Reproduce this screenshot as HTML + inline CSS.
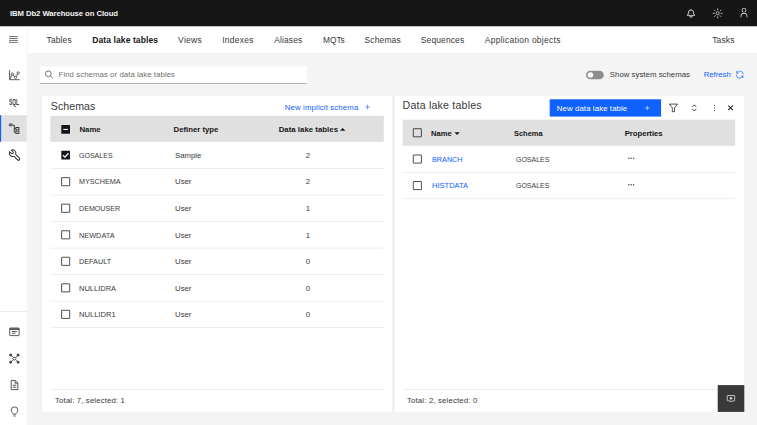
<!DOCTYPE html>
<html lang="en"><head><meta charset="utf-8"><title>IBM Db2 Warehouse on Cloud</title>
<style>
*{box-sizing:border-box;margin:0;padding:0}
html,body{width:757px;height:425px;overflow:hidden}
body{position:relative;background:#f4f4f4;font-family:"Liberation Sans",sans-serif;color:#161616}
.bg{position:absolute;left:0;top:0;display:block}
.t{position:absolute;white-space:nowrap;line-height:1;transform-origin:0 0}

</style></head>
<body>
<svg class="bg" width="757" height="425" viewBox="0 0 757 425">
<!-- chrome -->
<rect x="0" y="0" width="757" height="26.5" fill="#161616"/>
<rect x="0" y="26.5" width="26.8" height="398.5" fill="#fff"/>
<rect x="26.8" y="26.5" width="730.2" height="26.3" fill="#fff"/>
<rect x="26.6" y="26.5" width="1.2" height="26.3" fill="#f6f6f6"/>
<rect x="0" y="115.2" width="26.8" height="26.5" fill="#e0e0e0"/>
<rect x="0" y="115.2" width="1.15" height="26.5" fill="#0f62fe"/>
<rect x="0" y="311" width="26.8" height=".55" fill="#e0e0e0"/>
<!-- search -->
<rect x="40.3" y="66.5" width="266.4" height="16.6" fill="#fff"/>
<rect x="40.3" y="83.05" width="266.4" height=".65" fill="#8d8d8d"/>
<!-- toggle -->
<rect x="586" y="70.7" width="17.8" height="8.6" rx="4.3" fill="#8d8d8d"/>
<circle cx="590.4" cy="75" r="2.8" fill="#fff"/>
<!-- panels -->
<rect x="40.7" y="95.8" width="703.7" height="316.1" fill="#e8e8e8"/>
<rect x="41.5" y="95.8" width="351" height="316.1" fill="#fff"/>
<rect x="394.1" y="95.8" width="350.3" height="316.1" fill="#fff"/>
<!-- left table -->
<rect x="402.6" y="119.7" width="332.6" height="26.1" fill="#e0e0e0"/>
<rect x="50.4" y="115.8" width="333.4" height="26.1" fill="#e0e0e0"/>
<g fill="#e0e0e0">
<rect x="50.4" y="168.2" width="333.4" height=".55"/>
<rect x="50.4" y="194.7" width="333.4" height=".55"/>
<rect x="50.4" y="221.25" width="333.4" height=".55"/>
<rect x="50.4" y="247.8" width="333.4" height=".55"/>
<rect x="50.4" y="274.3" width="333.4" height=".55"/>
<rect x="50.4" y="300.85" width="333.4" height=".55"/>
<rect x="50.4" y="327.4" width="333.4" height=".55"/>
<rect x="50.4" y="389" width="333.4" height=".55"/>
<rect x="402.6" y="172" width="332.6" height=".55"/>
<rect x="402.6" y="198.5" width="332.6" height=".55"/>
<rect x="402.6" y="389" width="315" height=".55"/>
</g>
<!-- checkboxes left -->
<rect x="61.3" y="125.1" width="8.7" height="8.7" rx=".5" fill="#161616"/>
<rect x="63.3" y="128.9" width="4.7" height="1.1" fill="#fff"/>
<rect x="61.3" y="150.85" width="8.7" height="8.7" rx=".5" fill="#161616"/>
<path d="M63 155.25l1.9 1.9 3.6-3.9" fill="none" stroke="#fff" stroke-width="1.15"/>
<g fill="#fff" stroke="#161616" stroke-width=".75">
<rect x="61.6" y="177.65" width="8.1" height="8.1" rx=".2"/>
<rect x="61.6" y="204.2" width="8.1" height="8.1" rx=".2"/>
<rect x="61.6" y="230.75" width="8.1" height="8.1" rx=".2"/>
<rect x="61.6" y="257.25" width="8.1" height="8.1" rx=".2"/>
<rect x="61.6" y="283.8" width="8.1" height="8.1" rx=".2"/>
<rect x="61.6" y="310.3" width="8.1" height="8.1" rx=".2"/>
<rect x="413.3" y="128.7" width="8.1" height="8.1" rx=".2" fill="none"/>
<rect x="413.3" y="155" width="8.1" height="8.1" rx=".2"/>
<rect x="413.3" y="181.5" width="8.1" height="8.1" rx=".2"/>
</g>
<!-- sort arrows -->
<path d="M340 130.7l2.7-2.6 2.7 2.6z" fill="#161616"/>
<path d="M454.4 132.2h5.4l-2.7 2.7z" fill="#161616"/>
<!-- plus (implicit schema) -->
<path d="M367.6 104.8v4.4M365.4 107h4.4" stroke="#0f62fe" stroke-width=".6" fill="none"/>
<!-- button -->
<rect x="549.7" y="99.3" width="111.4" height="17.3" fill="#0f62fe"/>
<path d="M647.3 105.9v4.2M645.2 108h4.2" stroke="#fff" stroke-width=".6" fill="none"/>
<!-- ellipsis -->
<g fill="#393939"><circle cx="628.8" cy="158.3" r=".7"/><circle cx="631.2" cy="158.3" r=".7"/><circle cx="633.6" cy="158.3" r=".7"/>
<circle cx="628.8" cy="184.8" r=".7"/><circle cx="631.2" cy="184.8" r=".7"/><circle cx="633.6" cy="184.8" r=".7"/></g>
<!-- fab -->
<rect x="717.7" y="385.1" width="26.6" height="26.8" fill="#393939"/>
<g transform="translate(726.9 395.1)" fill="none" stroke="#f4f4f4" stroke-width=".7" stroke-linejoin="round"><path d="M.9.4h6.4a.5.5 0 0 1 .5.5v4.4a.5.5 0 0 1-.5.5H5.1L4.3 7 3.5 5.800H.9a.5.5 0 0 1-.5-.5V.9A.5.5 0 0 1 .9.400z"/><path d="M4.1 1.500l.6 1.100 1.200.100-.900.800.300 1.200-1.200-.700-1.200.700.300-1.200-.900-.800 1.200-.100z" fill="#f4f4f4" stroke="none"/></g>
<!-- header icons -->
<g transform="translate(686.44 8.6) scale(.285)" fill="#f4f4f4" stroke="#f4f4f4" stroke-width=".8"><path d="M28.7,20.3L26,17.6V14a10,10,0,0,0-9-9.9V2H15V4.1A10,10,0,0,0,6,14v3.6L3.3,20.3A1,1,0,0,0,3,21v3a1,1,0,0,0,1,1h7v.8a5.2,5.2,0,0,0,4.5,5.2A5,5,0,0,0,21,26V25h7a1,1,0,0,0,1-1V21A1,1,0,0,0,28.7,20.3ZM19,26a3,3,0,0,1-6,0V25h6Zm8-3H5V21.4L7.7,18.7A1,1,0,0,0,8,18V14a8,8,0,0,1,16,0v4a1,1,0,0,0,.3.7L27,21.4Z"/></g>
<g transform="translate(712.4 8) scale(.33125)" fill="none" stroke="#f4f4f4" stroke-width="2.1"><circle cx="16" cy="16" r="4.6"/><path d="M16 1v6M16 25v6M1 16h6M25 16h6M5.4 5.4l4.3 4.3M22.3 22.3l4.3 4.3M5.4 26.6l4.3-4.3M22.3 9.7l4.3-4.3"/></g>
<g transform="translate(738.6 7.2) scale(.3375)" fill="#f4f4f4"><path d="M16,4a5,5,0,1,1-5,5,5,5,0,0,1,5-5m0-2a7,7,0,1,0,7,7A7,7,0,0,0,16,2Z"/><path d="M26,30H24V25a5,5,0,0,0-5-5H13a5,5,0,0,0-5,5v5H6V25a7,7,0,0,1,7-7h6a7,7,0,0,1,7,7Z"/></g>
<!-- hamburger -->
<g transform="translate(9 36.1)" stroke="#393939" stroke-width=".7"><path d="M0 .45h8.8M0 2.4h8.8M0 4.35h8.8M0 6.3h8.8"/></g>
<!-- chart icon -->
<g transform="translate(9.2 70)" fill="none" stroke="#262626" stroke-width=".75"><path d="M.4 0v9.7h10"/><path d="M.9 8.9l1.6-3.7M3.7 4.9l1.9 2.1M6.9 6.7l1.6-2.8"/><g stroke-width=".65"><circle cx="3.1" cy="4.1" r="1.15"/><circle cx="6.3" cy="7.4" r="1.15"/><circle cx="9" cy="2.9" r="1.15"/></g></g>
<!-- tree icon -->
<g transform="translate(-.3 .6)" fill="none" stroke="#262626" stroke-width=".85"><ellipse cx="11" cy="124.3" rx="1.8" ry="1.35" fill="#6f6f6f" stroke="#525252" stroke-width=".5"/><path d="M12.9 124.6h1.7v7.1h1.3M14.6 128.1h1.3"/><rect x="16.2" y="126.9" width="3" height="2.3"/><rect x="16.2" y="130.5" width="3" height="2.3"/></g>
<!-- wrench -->
<g transform="translate(12.6 153.1) rotate(-45)" fill="none" stroke="#262626" stroke-width=".95" stroke-linejoin="round"><path d="M1.2-3.07A3.3 3.3 0 0 1 1.3 3.03V8.3A1.3 1.3 0 0 1-1.3 8.3V3.03A3.3 3.3 0 0 1-1.2-3.07V-.7A1.2 1.2 0 0 0 1.2-.7Z"/></g>
<!-- bottom icons -->
<g transform="translate(9.3 327.6)" fill="none" stroke="#262626" stroke-width=".75"><rect x=".4" y=".4" width="9.4" height="7.6" rx=".6"/><path d="M.4 1.5h9.4" stroke-width="1.3"/><path d="M2.6 3.9h5M2.6 5.7h3.6"/></g>
<g transform="translate(9.3 353.6)" fill="none" stroke="#262626" stroke-width=".75"><path d="M2 2l2.2 2.2M8.2 2L6 4.2M2 8l2.2-2.2M8.2 8L6 5.8"/><rect x="3.9" y="3.8" width="2.4" height="2.4" transform="rotate(45 5.1 5)"/><g fill="#525252"><circle cx="1.4" cy="1.4" r="1.05"/><circle cx="8.8" cy="1.4" r="1.05"/><circle cx="1.4" cy="8.6" r="1.05"/><circle cx="8.8" cy="8.6" r="1.05"/></g></g>
<g transform="translate(10.8 380)" fill="none" stroke="#262626" stroke-width=".75"><path d="M.4.4h4l2.6 2.6v6.6H.4z"/><path d="M4.2.5v2.7h2.7M1.9 5.2h3.6M1.9 7.2h3.6"/></g>
<g transform="translate(10.8 406.6)" fill="none" stroke="#262626" stroke-width=".75"><path d="M2.4 7.6C2.4 6.4.4 5.6.4 3.6a3.3 3.3 0 0 1 6.6 0c0 2-2 2.8-2 4z"/><path d="M2.5 9.4h2.4"/></g>
<!-- search icon -->
<g transform="translate(44.8 70.4)" fill="none" stroke="#525252" stroke-width=".8"><circle cx="3.5" cy="3.4" r="2.9"/><path d="M5.6 5.5l2.5 2.4"/></g>
<!-- refresh icon -->
<g transform="translate(735.16 69.96) scale(.29)" fill="#0f62fe"><path d="M12 10H6.78A11 11 0 0 1 27 16h2A13 13 0 0 0 6 7.68V4H4v8h8zM20 22h5.22A11 11 0 0 1 5 16H3a13 13 0 0 0 23 8.32V28h2v-8h-8z"/></g>
<!-- panel icons -->
<g transform="translate(668.8 103.6)" fill="none" stroke="#262626" stroke-width=".8" stroke-linejoin="round"><path d="M.5.5h8.2L5.7 4.2v3.9H3.5V4.2z"/></g>
<g transform="translate(691.9 104.4)" fill="none" stroke="#161616" stroke-width=".85"><path d="M.4 2.5L2.4.5l2 2M.4 4.5l2 2 2-2"/></g>
<g transform="translate(714 105)" fill="#161616"><circle cx=".5" cy=".5" r=".5"/><circle cx=".5" cy="3" r=".5"/><circle cx=".5" cy="5.5" r=".5"/></g>
<g transform="translate(727.9 105.2)" fill="none" stroke="#161616" stroke-width="1.05"><path d="M.3.3l4.7 4.7M5 .3L.3 5"/></g>
</svg>

<header>
<span class="t" id="t0" style="left:10.0px;top:10px;font-size:7.7px;color:#f4f4f4;font-weight:700;letter-spacing:-0.059px;">IBM Db2 Warehouse on Cloud</span>
</header>
<aside aria-label="Side navigation">
<span class="t" id="t1" style="left:9.3px;top:98px;font-size:8.3px;color:#393939;font-weight:700;transform:scaleX(0.5861);">SQL</span>
</aside>
<nav aria-label="Object types">
<span class="t" id="t2" style="left:46.6px;top:36px;font-size:8.5px;color:#393939;letter-spacing:0.104px;">Tables</span>
<span class="t" id="t3" style="left:92.3px;top:36px;font-size:8.5px;color:#161616;font-weight:700;letter-spacing:0.096px;">Data lake tables</span>
<span class="t" id="t4" style="left:178.1px;top:36px;font-size:8.5px;color:#393939;letter-spacing:0.267px;">Views</span>
<span class="t" id="t5" style="left:222.2px;top:36px;font-size:8.5px;color:#393939;letter-spacing:0.270px;">Indexes</span>
<span class="t" id="t6" style="left:274.2px;top:36px;font-size:8.5px;color:#393939;letter-spacing:0.116px;">Aliases</span>
<span class="t" id="t7" style="left:322.7px;top:36px;font-size:8.5px;color:#393939;transform:scaleX(0.9818);">MQTs</span>
<span class="t" id="t8" style="left:364.6px;top:36px;font-size:8.5px;color:#393939;letter-spacing:0.110px;">Schemas</span>
<span class="t" id="t9" style="left:420.8px;top:36px;font-size:8.5px;color:#393939;letter-spacing:0.107px;">Sequences</span>
<span class="t" id="t10" style="left:484.8px;top:36px;font-size:8.5px;color:#393939;letter-spacing:0.262px;">Application objects</span>
<span class="t" id="t11" style="left:712.2px;top:36px;font-size:8.5px;color:#393939;letter-spacing:0.141px;">Tasks</span>
</nav>
<div class="toolbar">
<span class="t" id="t12" style="left:58.6px;top:71px;font-size:7.8px;color:#6f6f6f;letter-spacing:0.064px;">Find schemas or data lake tables</span>
<span class="t" id="t13" style="left:609.8px;top:71px;font-size:7.8px;color:#393939;letter-spacing:0.026px;">Show system schemas</span>
<span class="t" id="t14" style="left:703.7px;top:71px;font-size:7.8px;color:#0f62fe;letter-spacing:-0.035px;">Refresh</span>
</div>
<section class="panel" aria-label="Schemas">
<span class="t" id="t15" style="left:50.8px;top:101px;font-size:10.6px;color:#393939;letter-spacing:0.055px;">Schemas</span>
<span class="t" id="t16" style="left:284.8px;top:104px;font-size:7.8px;color:#0f62fe;letter-spacing:0.135px;">New implicit schema</span>
<span class="t" id="t17" style="left:79.5px;top:126px;font-size:7.8px;color:#161616;font-weight:700;letter-spacing:-0.017px;">Name</span>
<span class="t" id="t18" style="left:173.6px;top:126px;font-size:7.8px;color:#161616;font-weight:700;letter-spacing:-0.024px;">Definer type</span>
<span class="t" id="t19" style="left:278.7px;top:126px;font-size:7.8px;color:#161616;font-weight:700;letter-spacing:0.023px;">Data lake tables</span>
<span class="t" id="t20" style="left:79.3px;top:152px;font-size:7.8px;color:#393939;transform:scaleX(0.9013);">GOSALES</span>
<span class="t" id="t21" style="left:175.1px;top:152px;font-size:7.8px;color:#393939;letter-spacing:-0.027px;">Sample</span>
<span class="t" id="t22" style="left:308.0px;top:152px;font-size:7.8px;color:#393939;transform:translateX(-50%);">2</span>
<span class="t" id="t23" style="left:79.3px;top:178px;font-size:7.8px;color:#393939;transform:scaleX(0.9232);">MYSCHEMA</span>
<span class="t" id="t24" style="left:175.1px;top:178px;font-size:7.8px;color:#393939;letter-spacing:-0.056px;">User</span>
<span class="t" id="t25" style="left:308.0px;top:178px;font-size:7.8px;color:#393939;transform:translateX(-50%);">2</span>
<span class="t" id="t26" style="left:79.3px;top:205px;font-size:7.8px;color:#393939;transform:scaleX(0.9121);">DEMOUSER</span>
<span class="t" id="t27" style="left:175.1px;top:205px;font-size:7.8px;color:#393939;letter-spacing:-0.056px;">User</span>
<span class="t" id="t28" style="left:308.0px;top:205px;font-size:7.8px;color:#393939;transform:translateX(-50%);">1</span>
<span class="t" id="t29" style="left:79.3px;top:232px;font-size:7.8px;color:#393939;transform:scaleX(0.9411);">NEWDATA</span>
<span class="t" id="t30" style="left:175.1px;top:232px;font-size:7.8px;color:#393939;letter-spacing:-0.056px;">User</span>
<span class="t" id="t31" style="left:308.0px;top:232px;font-size:7.8px;color:#393939;transform:translateX(-50%);">1</span>
<span class="t" id="t32" style="left:79.3px;top:258px;font-size:7.8px;color:#393939;transform:scaleX(0.9300);">DEFAULT</span>
<span class="t" id="t33" style="left:175.1px;top:258px;font-size:7.8px;color:#393939;letter-spacing:-0.056px;">User</span>
<span class="t" id="t34" style="left:308.0px;top:258px;font-size:7.8px;color:#393939;transform:translateX(-50%);">0</span>
<span class="t" id="t35" style="left:79.3px;top:285px;font-size:7.8px;color:#393939;transform:scaleX(0.9621);">NULLIDRA</span>
<span class="t" id="t36" style="left:175.1px;top:285px;font-size:7.8px;color:#393939;letter-spacing:-0.056px;">User</span>
<span class="t" id="t37" style="left:308.0px;top:285px;font-size:7.8px;color:#393939;transform:translateX(-50%);">0</span>
<span class="t" id="t38" style="left:79.3px;top:311px;font-size:7.8px;color:#393939;transform:scaleX(0.9707);">NULLIDR1</span>
<span class="t" id="t39" style="left:175.1px;top:311px;font-size:7.8px;color:#393939;letter-spacing:-0.056px;">User</span>
<span class="t" id="t40" style="left:308.0px;top:311px;font-size:7.8px;color:#393939;transform:translateX(-50%);">0</span>
<span class="t" id="t41" style="left:55.1px;top:397px;font-size:7.8px;color:#393939;letter-spacing:0.131px;">Total: 7, selected: 1</span>
</section>
<section class="panel" aria-label="Data lake tables">
<span class="t" id="t42" style="left:402.6px;top:100px;font-size:10.6px;color:#393939;letter-spacing:0.202px;">Data lake tables</span>
<span class="t" id="t43" style="left:556.8px;top:105px;font-size:7.8px;color:#ffffff;letter-spacing:0.106px;">New data lake table</span>
<span class="t" id="t44" style="left:431.4px;top:130px;font-size:7.8px;color:#161616;font-weight:700;transform:scaleX(0.9835);">Name</span>
<span class="t" id="t45" style="left:513.8px;top:130px;font-size:7.8px;color:#161616;font-weight:700;transform:scaleX(0.9563);">Schema</span>
<span class="t" id="t46" style="left:624.7px;top:130px;font-size:7.8px;color:#161616;font-weight:700;letter-spacing:-0.075px;">Properties</span>
<span class="t" id="t47" style="left:431.7px;top:156px;font-size:7.8px;color:#0f62fe;transform:scaleX(0.9290);">BRANCH</span>
<span class="t" id="t48" style="left:431.7px;top:182px;font-size:7.8px;color:#0f62fe;transform:scaleX(0.9651);">HISTDATA</span>
<span class="t" id="t49" style="left:515.8px;top:156px;font-size:7.8px;color:#393939;transform:scaleX(0.8959);">GOSALES</span>
<span class="t" id="t50" style="left:515.8px;top:182px;font-size:7.8px;color:#393939;transform:scaleX(0.8959);">GOSALES</span>
<span class="t" id="t51" style="left:407.0px;top:397px;font-size:7.8px;color:#393939;letter-spacing:0.156px;">Total: 2, selected: 0</span>
</section>
</body></html>
